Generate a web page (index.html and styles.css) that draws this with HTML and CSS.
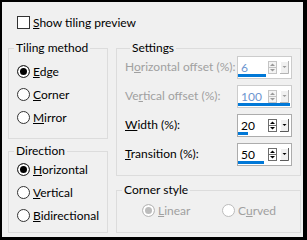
FILE: index.html
```html
<!DOCTYPE html>
<html lang="en">
<head>
    <meta charset="UTF-8">
    <title>Tiling</title>
    <link rel="stylesheet" href="styles.css">
</head>
<body>
    <div class="dialog">
        <div class="check-row">
            <span class="checkbox"></span>
            <span><u>S</u>how tiling preview</span>
        </div>

        <div class="columns">
            <div class="col-left">
                <fieldset class="group tiling">
                    <legend>Tiling method</legend>
                    <div class="option"><span class="radio checked"></span><span><u>E</u>dge</span></div>
                    <div class="option"><span class="radio"></span><span><u>C</u>orner</span></div>
                    <div class="option"><span class="radio"></span><span><u>M</u>irror</span></div>
                </fieldset>

                <fieldset class="group direction">
                    <legend>Direction</legend>
                    <div class="option"><span class="radio checked"></span><span><u>H</u>orizontal</span></div>
                    <div class="option"><span class="radio"></span><span><u>V</u>ertical</span></div>
                    <div class="option"><span class="radio"></span><span><u>B</u>idirectional</span></div>
                </fieldset>
            </div>

            <div class="col-right">
                <fieldset class="group settings">
                    <legend>Settings</legend>
                    <div class="setting disabled">
                        <span class="setting-label">H<u>o</u>rizontal offset (%):</span>
                        <div class="spin">
                            <div class="spin-field">6<span class="spin-bar" style="width:28px"></span></div>
                            <svg class="updown" width="9" height="13" viewBox="0 0 9 13"><rect x="0.5" y="0.5" width="8" height="12" fill="#f4f4f4" stroke="#c4c4c4"/><line x1="0" y1="6.5" x2="9" y2="6.5" stroke="#c4c4c4"/><polygon points="2,5 4.5,2.5 7,5" fill="#9a9a9a"/><polygon points="2,8 7,8 4.5,10.5" fill="#9a9a9a"/></svg>
                            <svg class="drop" width="9" height="13" viewBox="0 0 9 13"><rect width="9" height="13" fill="#f0f0f0"/><path d="M0.5 13V0.5H9" fill="none" stroke="#fff"/><path d="M8.5 0V12.5H0" fill="none" stroke="#b4b4b4"/><polygon points="2.5,5 6.5,5 4.5,7" fill="#9a9a9a"/></svg>
                        </div>
                    </div>
                    <div class="setting disabled">
                        <span class="setting-label">Ve<u>r</u>tical offset (%):</span>
                        <div class="spin">
                            <div class="spin-field">100<span class="spin-bar" style="width:52px"></span></div>
                            <svg class="updown" width="9" height="13" viewBox="0 0 9 13"><rect x="0.5" y="0.5" width="8" height="12" fill="#f4f4f4" stroke="#c4c4c4"/><line x1="0" y1="6.5" x2="9" y2="6.5" stroke="#c4c4c4"/><polygon points="2,5 4.5,2.5 7,5" fill="#9a9a9a"/><polygon points="2,8 7,8 4.5,10.5" fill="#9a9a9a"/></svg>
                            <svg class="drop" width="9" height="13" viewBox="0 0 9 13"><rect width="9" height="13" fill="#f0f0f0"/><path d="M0.5 13V0.5H9" fill="none" stroke="#fff"/><path d="M8.5 0V12.5H0" fill="none" stroke="#b4b4b4"/><polygon points="2.5,5 6.5,5 4.5,7" fill="#9a9a9a"/></svg>
                        </div>
                    </div>
                    <div class="setting">
                        <span class="setting-label"><u>W</u>idth (%):</span>
                        <div class="spin">
                            <div class="spin-field">20<span class="spin-bar" style="width:10px"></span></div>
                            <svg class="updown" width="9" height="13" viewBox="0 0 9 13"><rect x="0.5" y="0.5" width="8" height="12" fill="#fff" stroke="#6d6d6d"/><line x1="0" y1="6.5" x2="9" y2="6.5" stroke="#6d6d6d"/><polygon points="2,5 4.5,2.5 7,5" fill="#000"/><polygon points="2,8 7,8 4.5,10.5" fill="#000"/></svg>
                            <svg class="drop" width="9" height="13" viewBox="0 0 9 13"><rect width="9" height="13" fill="#f0f0f0"/><path d="M0.5 13V0.5H9" fill="none" stroke="#fff"/><path d="M8.5 0V12.5H0" fill="none" stroke="#5a5a5a"/><polygon points="2.5,5 6.5,5 4.5,7" fill="#000"/></svg>
                        </div>
                    </div>
                    <div class="setting">
                        <span class="setting-label"><u>T</u>ransition (%):</span>
                        <div class="spin">
                            <div class="spin-field">50<span class="spin-bar" style="width:26px"></span></div>
                            <svg class="updown" width="9" height="13" viewBox="0 0 9 13"><rect x="0.5" y="0.5" width="8" height="12" fill="#fff" stroke="#6d6d6d"/><line x1="0" y1="6.5" x2="9" y2="6.5" stroke="#6d6d6d"/><polygon points="2,5 4.5,2.5 7,5" fill="#000"/><polygon points="2,8 7,8 4.5,10.5" fill="#000"/></svg>
                            <svg class="drop" width="9" height="13" viewBox="0 0 9 13"><rect width="9" height="13" fill="#f0f0f0"/><path d="M0.5 13V0.5H9" fill="none" stroke="#fff"/><path d="M8.5 0V12.5H0" fill="none" stroke="#5a5a5a"/><polygon points="2.5,5 6.5,5 4.5,7" fill="#000"/></svg>
                        </div>
                    </div>
                </fieldset>

                <fieldset class="group corner">
                    <legend>Corner style</legend>
                    <div class="corner-row">
                        <div class="option disabled"><span class="radio checked"></span><span><u>L</u>inear</span></div>
                        <div class="option disabled"><span class="radio"></span><span>C<u>u</u>rved</span></div>
                    </div>
                </fieldset>
            </div>
        </div>
    </div>
</body>
</html>
```

FILE: styles.css
```css
body {
    margin: 0;
    background: #f0f0f0;
    font-family: Lato, "Noto Sans", sans-serif;
    font-size: 12px;
    line-height: 15px;
    color: #000;
}
.dialog {
    width: 307px;
    height: 240px;
    box-sizing: border-box;
    border: solid #000;
    border-width: 2px 4px 3px 2px;
    padding: 13px 0 0 6px;
}
.check-row {
    display: flex;
    align-items: center;
    height: 15px;
    padding-left: 9px;
}
.checkbox {
    width: 13px;
    height: 13px;
    box-sizing: border-box;
    border: 1px solid #333;
    background: #fff;
    margin-right: 3px;
}
.columns {
    display: flex;
    gap: 8px;
    margin-top: 11px;
}
.col-left {
    width: 100px;
    display: flex;
    flex-direction: column;
}
.col-right {
    width: 185px;
    display: flex;
    flex-direction: column;
}
.group {
    margin: 0;
    padding: 0;
    min-width: 0;
    border: 1px solid #dcdcdc;
}
.group legend {
    margin-left: 5px;
    padding: 0 2px;
    line-height: 14px;
}
.tiling {
    padding: 5px 0 9px;
}
.direction {
    margin-top: 5px;
    padding: 0 0 5px;
}
.option {
    display: flex;
    align-items: center;
    height: 23px;
    padding-left: 8px;
}
.radio {
    width: 13px;
    height: 13px;
    box-sizing: border-box;
    border: 1px solid #333;
    border-radius: 50%;
    background: #fff;
    margin-right: 3px;
}
.radio.checked {
    background: #000;
    box-shadow: inset 0 0 0 2px #fff;
}
.option.disabled {
    color: #a0a0a0;
    padding-left: 0;
}
.option.disabled .radio {
    border-color: #bcbcbc;
}
.option.disabled .radio.checked {
    background: #bcbcbc;
}
.settings {
    padding: 1px 8px 9px;
}
.setting {
    display: flex;
    align-items: center;
    justify-content: space-between;
    height: 23px;
}
.setting + .setting {
    margin-top: 6px;
}
.setting-label {
    padding-bottom: 2px;
}
.setting.disabled .setting-label {
    color: #a0a0a0;
}
.spin {
    display: flex;
    align-items: center;
    width: 55px;
    height: 23px;
    box-sizing: border-box;
    border: 1px solid #acacac;
    background: #fff;
    position: relative;
}
.setting.disabled .spin {
    border-color: #cccccc;
}
.spin-field {
    flex: 1;
    padding-left: 3px;
}
.setting.disabled .spin-field {
    color: #6d95cf;
}
.spin-bar {
    position: absolute;
    left: 0;
    bottom: 1px;
    height: 3px;
    background: #0078d7;
}
.updown {
    display: block;
    margin-right: 3px;
}
.drop {
    display: block;
    margin-right: 2px;
}
.corner {
    margin-top: 7px;
    padding: 2px 0 10px;
}
.corner-row {
    display: flex;
    padding-left: 25px;
}
.corner-row .option:first-child {
    width: 80px;
}
```
